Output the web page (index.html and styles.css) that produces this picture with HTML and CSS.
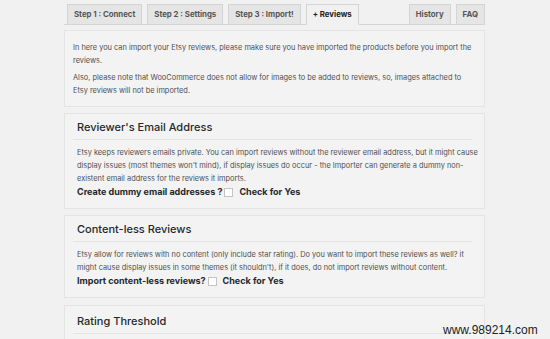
FILE: index.html
```html
<!DOCTYPE html>
<html lang="en">

<head>
    <meta charset="UTF-8">
    <meta name="viewport" content="width=device-width, initial-scale=1.0">
    <title>Etsy Importer - Reviews</title>
    <link rel="stylesheet" href="styles.css">
</head>

<body>
    <div class="wrap">
        <nav class="tabs">
            <a class="tab" href="#">Step 1 : Connect</a>
            <a class="tab" href="#">Step 2 : Settings</a>
            <a class="tab" href="#">Step 3 : Import!</a>
            <a class="tab active" href="#">+ Reviews</a>
            <a class="tab push" href="#">History</a>
            <a class="tab" href="#">FAQ</a>
        </nav>

        <div class="panel intro">
            <p>In here you can import your Etsy reviews, please make sure you have imported the products before you import the reviews.</p>
            <p>Also, please note that WooCommerce does not allow for images to be added to reviews, so, images attached to Etsy reviews will not be imported.</p>
        </div>

        <div class="panel">
            <h2>Reviewer's Email Address</h2>
            <p>Etsy keeps reviewers emails private. You can import reviews without the reviewer email address, but it might cause display issues (most themes won't mind), if display issues do occur - the Importer can generate a dummy non-existent email address for the reviews it imports.</p>
            <label class="check">Create dummy email addresses ? <input type="checkbox"> Check for Yes</label>
        </div>

        <div class="panel">
            <h2>Content-less Reviews</h2>
            <p>Etsy allow for reviews with no content (only include star rating). Do you want to import these reviews as well? it might cause display issues in some themes (it shouldn't), if it does, do not import reviews without content.</p>
            <label class="check">Import content-less reviews? <input type="checkbox"> Check for Yes</label>
        </div>

        <div class="panel last">
            <h2>Rating Threshold</h2>
        </div>
    </div>

    <div class="watermark">www.989214.com</div>
</body>

</html>
```

FILE: styles.css
```css
* {
    margin: 0;
    padding: 0;
    box-sizing: border-box;
}

body {
    width: 550px;
    height: 339px;
    overflow: hidden;
    background: #f1f1f1;
    font-family: 'Inter', 'Liberation Sans', sans-serif;
    color: #444;
}

.wrap {
    width: 421px;
    margin-left: 64px;
}

.tabs {
    display: flex;
    gap: 5px;
    padding: 4px 0 0 3px;
    border-bottom: 1px solid #d4d4d4;
}

.tab {
    display: block;
    margin-bottom: -1px;
    padding: 4px 6px;
    font-size: 7.8px;
    line-height: 11px;
    font-weight: 700;
    color: #555;
    text-decoration: none;
    background: #e5e5e5;
    border: 1px solid #d4d4d4;
}

.tab.active {
    color: #222;
    background: #f1f1f1;
    border-bottom-color: #f1f1f1;
}

.tab.push {
    margin-left: auto;
}

.panel {
    margin-top: 6px;
    padding: 5px 12px 9px 8px;
    background: #f3f3f3;
    border: 1px solid #e4e4e4;
}

.intro {
    margin-top: 5px;
    padding: 10px 12px 9px 8px;
}

.last {
    margin-top: 7px;
    padding-top: 7px;
}

.panel p {
    font-size: 7.4px;
    line-height: 13px;
    color: #505050;
}

.intro p + p {
    margin-top: 4px;
}

.panel h2 {
    padding: 0 4px 3px;
    font-size: 11px;
    line-height: 17px;
    font-weight: 500;
    color: #23282d;
    border-bottom: 1px solid #e4e4e4;
}

.panel h2 + p {
    margin-top: 6px;
    margin-right: -6px;
    padding: 0 0 0 4px;
}

.check {
    display: flex;
    align-items: center;
    gap: 2px;
    padding: 0 4px;
    font-size: 9px;
    line-height: 14px;
    font-weight: 700;
    color: #23282d;
}

.check input {
    appearance: none;
    width: 9px;
    height: 9px;
    margin-right: 4px;
    background: #fff;
    border: 1px solid #c4c4c4;
}

.watermark {
    position: absolute;
    left: 443px;
    top: 323px;
    font-family: 'Liberation Sans', sans-serif;
    font-size: 12px;
    color: #222;
}
```
